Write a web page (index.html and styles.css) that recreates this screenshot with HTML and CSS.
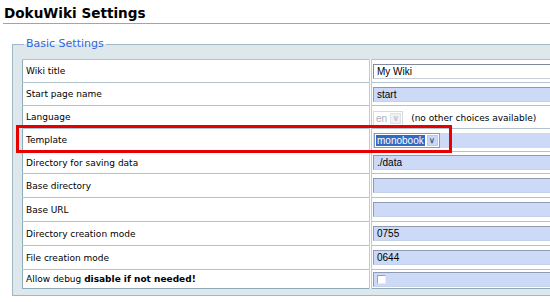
FILE: index.html
```html
<!DOCTYPE html>
<html>
<head>
<meta charset="utf-8">
<link rel="stylesheet" href="styles.css">
</head>
<body>
<h1 class="title">DokuWiki Settings</h1>
<fieldset class="settings">
  <legend class="legend">Basic Settings</legend>
  <table class="conf">
    <tr class="r23"><td class="label">Wiki title</td><td class="value"><span class="edit white">My Wiki</span></td></tr>
    <tr class="r23"><td class="label">Start page name</td><td class="value"><span class="edit">start</span></td></tr>
    <tr class="r23"><td class="label">Language</td><td class="value"><span class="sel-dis"><span class="sel-txt">en</span><span class="sel-arrow dis">&#8744;</span></span><span class="note">(no other choices available)</span></td></tr>
    <tr class="r23"><td class="label">Template</td><td class="value"><span class="edit selwrap"><span class="sel"><span class="sel-hl">monobook</span><span class="sel-arrow">&#8744;</span></span></span></td></tr>
    <tr class="r22"><td class="label">Directory for saving data</td><td class="value"><span class="edit">./data</span></td></tr>
    <tr class="r24"><td class="label">Base directory</td><td class="value"><span class="edit"></span></td></tr>
    <tr class="r24"><td class="label">Base URL</td><td class="value"><span class="edit"></span></td></tr>
    <tr class="r24"><td class="label">Directory creation mode</td><td class="value"><span class="edit">0755</span></td></tr>
    <tr class="r24"><td class="label">File creation mode</td><td class="value"><span class="edit">0644</span></td></tr>
    <tr class="r19"><td class="label">Allow debug <b>disable if not needed!</b></td><td class="value"><span class="edit"><span class="chk"></span></span></td></tr>
  </table>
</fieldset>
<div class="highlight"></div>
</body>
</html>
```
FILE: styles.css
```css
html, body {
  margin: 0;
  padding: 0;
}
body {
  width: 550px;
  height: 302px;
  overflow: hidden;
  background: #fff;
  position: relative;
  font-family: "DejaVu Sans", Verdana, sans-serif;
  color: #000;
}
.title {
  margin: 0 0 0 3px;
  padding: 6px 0 2px 1px;
  font-family: "DejaVu Sans", Verdana, sans-serif;
  font-weight: bold;
  font-size: 13.6px;
  line-height: 15px;
  border-bottom: 1px solid #8cacbb;
  white-space: nowrap;
}
.settings {
  margin: 13px 0 0 12px;
  padding: 8px 0 6px 9px;
  box-sizing: border-box;
  width: calc(100% - 12px);
  border: 1px solid #9fb8c4;
  border-right: none;
  background: #dee7ec;
  min-inline-size: 0;
}
.legend {
  margin-left: 2px;
  padding: 0 2px;
  font-size: 11px;
  line-height: 14px;
  color: #2f66dc;
}
.conf {
  border-collapse: collapse;
  width: 100%;
  background: #fff;
  border: 1px solid #8cacbb;
  border-right: none;
}
.conf td {
  padding: 0;
  border-top: 1px solid #b0c3cf;
  vertical-align: middle;
}
.r23 td { height: 22px; }
.r22 td { height: 21px; }
.r24 td { height: 23px; }
.r19 td { height: 18px; }
.label {
  width: 343px;
  padding-left: 3px !important;
  font-size: 9px;
  white-space: nowrap;
}
.value {
  border-left: 3px double #bccbd5;
  padding-left: 1px !important;
  white-space: nowrap;
}
.edit {
  display: flex;
  align-items: center;
  box-sizing: border-box;
  width: 100%;
  height: 15px;
  background: #ccdaf8;
  border: 1px solid;
  border-right: none;
  border-color: #8e9bb0 #c5d2e8 #c5d2e8 #8e9bb0;
  padding: 0 3px;
  font-family: "Liberation Sans", Arial, sans-serif;
  font-size: 10px;
}
.edit.white {
  background: #fff;
  border-color: #7f8b9c #c8ced6 #c8ced6 #7f8b9c;
}
.selwrap {
  padding: 0;
  border-color: #ccdaf8;
}
.sel {
  display: inline-flex;
  align-items: center;
  padding: 0 1px;
  background: #fff;
  border: 1px solid #7f9db9;
  box-sizing: border-box;
  height: 15px;
}
.sel-hl {
  background: #316ac5;
  color: #fff;
  padding: 0 1px;
  line-height: 11px;
  font-size: 10px;
}
.sel-arrow {
  display: inline-flex;
  align-items: center;
  justify-content: center;
  width: 11px;
  height: 11px;
  margin-left: 2px;
  background: #c8d8fb;
  color: #4d6185;
  font-size: 8px;
  font-weight: bold;
  border: 1px solid #b5c8f0;
  box-sizing: border-box;
}
.sel-arrow.dis {
  background: #eef0f3;
  color: #c0c6cf;
  border-color: #dfe3e8;
}
.sel-dis {
  display: inline-flex;
  align-items: center;
  vertical-align: middle;
  height: 15px;
  box-sizing: border-box;
  padding: 0 1px 0 2px;
  border: 1px solid #d6dbe2;
  background: #fff;
}
.sel-txt {
  color: #a9b0b9;
  font-family: "Liberation Sans", Arial, sans-serif;
  font-size: 10px;
  padding-right: 1px;
}
.note {
  font-size: 9px;
  margin-left: 8px;
  vertical-align: middle;
}
.chk {
  display: inline-block;
  width: 9px;
  height: 9px;
  box-sizing: border-box;
  background: #fff;
  border: 1px solid;
  border-color: #9aa4b0 #e8ecf0 #e8ecf0 #9aa4b0;
}
.highlight {
  position: absolute;
  left: 16px;
  top: 125px;
  width: 436px;
  height: 28px;
  box-sizing: border-box;
  border: 3px solid #e60000;
}
```
